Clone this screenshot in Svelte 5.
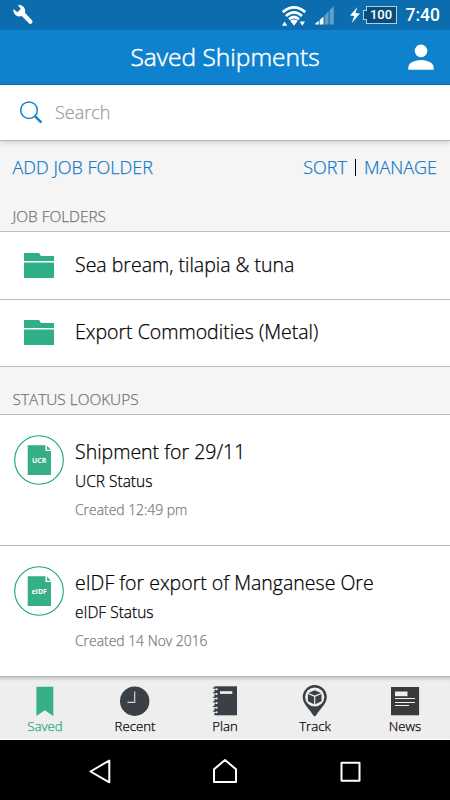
<script lang="ts">
  interface Lookup {
    title: string;
    status: string;
    created: string;
    code: string;
  }

  const folders: string[] = ['Sea bream, tilapia & tuna', 'Export Commodities (Metal)'];

  const lookups: Lookup[] = [
    { title: 'Shipment for 29/11', status: 'UCR Status', created: 'Created 12:49 pm', code: 'UCR' },
    {
      title: 'eIDF for export of Manganese Ore',
      status: 'eIDF Status',
      created: 'Created 14 Nov 2016',
      code: 'eIDF'
    }
  ];

  const tabs: string[] = ['Saved', 'Recent', 'Plan', 'Track', 'News'];
  let active = $state('Saved');
</script>

<div class="screen">
  <div class="status-bar">
    <svg class="wrench" width="20" height="21" viewBox="0 0 20 21">
      <path d="M5 .9 A6.2 6.2 0 0 1 11.9 8.8 L19 16.3 Q20.2 18 18.8 19.2 Q17.5 20.6 15.9 19.3 L8.7 12.1 A6.2 6.2 0 0 1 .5 5 L4.3 8.2 L7.7 5Z" />
    </svg>
    <div class="indicators">
      <svg class="wifi" width="24" height="21" viewBox="0 0 24 21">
        <g fill="none" stroke="#fff" stroke-width="2.7">
          <path d="M.8 6.1 Q12 -3.3 23.2 6.1" />
          <path d="M4 9.9 Q12 2.7 20 9.9" />
          <path d="M7 13.3 Q12 8.7 17 13.3" />
        </g>
        <path d="M8.2 14.8 Q12 12 15.8 14.8 L12 19.7Z M0 19.8 L2.6 15.5 L5.2 19.8Z M17.6 15.5 H23 L20.3 19.8Z" />
      </svg>
      <svg class="signal" width="19" height="19" viewBox="0 0 19 19">
        <path d="M0 18.5 V17.8 L3.8 14.7 V18.5Z M4.7 18.5 V14 L8.5 10.5 V18.5Z" />
        <path class="faint" d="M9.7 18.5 V9.2 L13.5 5.3 V18.5Z M14.6 18.5 V4.3 L18.8 0 V18.5Z" />
      </svg>
      <svg class="bolt" width="10" height="16" viewBox="0 0 10 16">
        <path d="M7.4 0 L0 8.5 L4.2 9 L1.8 16 L10 6.5 L5.5 6Z" />
      </svg>
      <div class="battery">100</div>
      <span class="clock">7:40</span>
    </div>
  </div>

  <header>
    <h1>Saved Shipments</h1>
    <svg class="person" width="26" height="26" viewBox="0 0 26 26">
      <circle cx="13" cy="6.9" r="6.3" />
      <path d="M.3 25.7 V23 Q1 18.5 7 16.9 Q13 15.2 19 16.9 Q25 18.5 25.7 23 V25.7Z" />
    </svg>
  </header>

  <div class="search">
    <svg width="23" height="23" viewBox="0 0 23 23">
      <circle cx="9" cy="9.2" r="8.3" fill="none" stroke="#1683cf" stroke-width="1.5" />
      <path d="M15 15.2 L21.4 21.6" fill="none" stroke="#1683cf" stroke-width="2.5" />
    </svg>
    <span>Search</span>
  </div>

  <div class="actions">
    <span class="link">ADD JOB FOLDER</span>
    <div class="right">
      <span class="link">SORT</span>
      <i class="divider"></i>
      <span class="link">MANAGE</span>
    </div>
  </div>

  <h2 class="jobs">JOB FOLDERS</h2>
  {#each folders as folder}
    <div class="folder">
      <svg width="30" height="25" viewBox="0 0 30 25">
        <path d="M0 0 H15 L17 3 H30 V8.1 H0Z M0 9.5 H30 V25 H0Z" />
      </svg>
      <span>{folder}</span>
    </div>
  {/each}

  <h2 class="statuses">STATUS LOOKUPS</h2>
  {#each lookups as item}
    <div class="lookup">
      <svg class="doc" width="50" height="50" viewBox="0 0 50 50">
        <circle cx="25" cy="25" r="24.3" fill="#fff" stroke="#16a574" stroke-width="1.1" />
        <path d="M13.7 10.3 H31.5 V16 H37 V40 H13.7Z M33 10.8 L37 14.8 H33Z" />
        <text x="25.2" y="28" text-anchor="middle">{item.code}</text>
      </svg>
      <div class="text">
        <span class="title">{item.title}</span>
        <span class="status">{item.status}</span>
        <span class="created">{item.created}</span>
      </div>
    </div>
  {/each}

  <nav class="tabs">
    {#each tabs as tab}
      <button class="tab" class:active={active === tab} onclick={() => (active = tab)}>
        <svg width="34" height="34" viewBox="0 0 34 34">
          {#if tab === 'Saved'}
            <path d="M8.4 2.8 H25.3 V32 L16.8 26.3 L8.4 32Z" fill="#36ae87" />
          {:else if tab === 'Recent'}
            <circle cx="16.7" cy="17.2" r="14.7" />
            <path d="M16.7 7.5 V18.3 H9.5" fill="none" stroke="#d4d6d7" stroke-width="1.2" />
          {:else if tab === 'Plan'}
            <path d="M6.4 2.3 H29 V31.3 H6.4Z" />
            <path d="M12 7.2 H24.3 V9.9 H12Z" fill="#eee" />
            {#each [5.2, 9.9, 14.5, 19.1, 23.7, 28.3] as y}
              <path d="M5 {y} H8.6" stroke="#eee" stroke-width="1" />
              <circle cx="8.6" cy={y} r="1" fill="#eee" />
              <path d="M4.8 {y - 1.2} H8" stroke="#3a4045" stroke-width="1" />
            {/each}
          {:else if tab === 'Track'}
            <path d="M16.7 1 A12.2 12.2 0 0 1 28.8 13.2 C28.8 20 21 26 18.3 31 Q16.7 33.5 15 31 C12.4 26 4.7 20 4.7 13.2 A12.2 12.2 0 0 1 16.7 1Z" />
            <circle cx="16.7" cy="13" r="9.6" fill="#eee" />
            <path d="M16.7 6.3 L23 8.9 L16.7 11.6 L10.4 8.9Z M9.9 10 L16.1 12.7 V20.2 L9.9 17.3Z M23.5 10 V17.3 L17.3 20.2 V12.7Z" />
          {:else}
            <path d="M3 3 H31.1 V31.3 H3Z" fill="#3a3a39" />
            <path d="M7 7.5 H19.5 V12.2 H7Z" fill="#eee" />
            <path d="M7 14.5 H27 M7 18.5 H27 M7 21.5 H21" stroke="#eee" stroke-width="1.2" />
          {/if}
        </svg>
        <span>{tab}</span>
      </button>
    {/each}
  </nav>

  <div class="system-nav">
    <svg width="24" height="26" viewBox="0 0 24 26">
      <path d="M2.5 13.5 L21.3 2.5 V24.3Z" />
    </svg>
    <svg width="26" height="26" viewBox="0 0 26 26">
      <path d="M2 24 V11.3 L13 2 L24 11.3 V24Z" />
    </svg>
    <svg width="22" height="22" viewBox="0 0 22 22">
      <path d="M2.5 2.7 H20.5 V20.8 H2.5Z" />
    </svg>
  </div>
</div>

<style>
  :global(body) {
    background: #f5f5f5;
  }
  .screen {
    width: 450px;
    height: 800px;
    display: flex;
    flex-direction: column;
    overflow: hidden;
    background: #f5f5f5;
    color: #000;
    font-family: 'Open Sans', 'Noto Sans', sans-serif;
    font-weight: 300;
    -webkit-text-stroke: 0.25px;
  }
  .screen > * {
    box-sizing: border-box;
    flex-shrink: 0;
  }
  svg {
    display: block;
    flex-shrink: 0;
  }

  .status-bar {
    height: 30px;
    padding: 0 10px 0 13px;
    display: flex;
    justify-content: space-between;
    background: #0b6cae;
    fill: #fff;
    -webkit-text-stroke: 0;
  }
  .wrench {
    margin-top: 4px;
  }
  .indicators {
    display: flex;
    align-items: flex-start;
    color: #fff;
  }
  .wifi {
    margin: 6px 9px 0 0;
  }
  .signal {
    margin: 6px 16px 0 0;
  }
  .faint {
    opacity: 0.35;
  }
  .bolt {
    margin: 7px 6px 0 0;
  }
  .battery {
    position: relative;
    box-sizing: border-box;
    width: 31px;
    height: 18px;
    margin: 6px 9px 0 0;
    border: 1px solid #b5cedf;
    background: #084d7c;
    text-align: center;
    font: 500 13px/16px Roboto, sans-serif;
  }
  .battery::before {
    content: '';
    position: absolute;
    left: -4px;
    top: 3px;
    width: 3px;
    height: 8px;
    border: 1px solid #b5cedf;
    border-right: 0;
    background: #084d7c;
  }
  .clock {
    font: 500 17.5px/31px Roboto, sans-serif;
  }

  header {
    height: 55px;
    display: grid;
    grid-template-columns: 1fr auto 1fr;
    align-items: center;
    padding: 0 16px;
    background: #0e82ce;
    border-bottom: 1px solid #0871b9;
    fill: #fff;
  }
  h1 {
    grid-column: 2;
    margin: 0;
    color: #fff;
    font-size: 24.5px;
    font-weight: 300;
    -webkit-text-stroke: 0.5px;
    line-height: 54px;
  }
  .person {
    justify-self: end;
  }

  .search {
    height: 56px;
    display: flex;
    align-items: center;
    gap: 12px;
    padding: 0 20px;
    background: #fff;
    border-bottom: 1px solid #b3b3b3;
    box-shadow: 0 2px 5px rgba(0, 0, 0, 0.14);
    color: #9c9c9c;
    font-size: 18px;
  }
  .search span {
    margin-top: -2px;
  }

  .actions {
    height: 54px;
    display: flex;
    justify-content: space-between;
    align-items: center;
    padding: 0 13px 2px 12.5px;
    font-size: 18px;
  }
  .right {
    display: flex;
    align-items: center;
  }
  .link {
    color: #1479c8;
  }
  .divider {
    width: 1px;
    height: 17px;
    margin: 0 8px;
    background: #000;
  }

  h2 {
    margin: 0;
    padding-left: 12.5px;
    border-bottom: 1px solid #bdbdbd;
    color: #747474;
    font-size: 15.4px;
    font-weight: 300;
  }
  .jobs {
    height: 37px;
    line-height: 44px;
  }
  .statuses {
    height: 48px;
    line-height: 66px;
  }

  .folder {
    height: 67.5px;
    display: flex;
    align-items: center;
    gap: 21px;
    padding-left: 24px;
    background: #fff;
    border-bottom: 1px solid #bdbdbd;
    font-size: 19.5px;
  }
  .folder span {
    margin-top: -2px;
  }
  .folder svg {
    fill: #2fae88;
  }

  .lookup {
    height: 131px;
    display: flex;
    gap: 11px;
    padding: 20px 0 0 14px;
    background: #fff;
    border-bottom: 1px solid #b5b5b5;
  }
  .doc {
    margin-left: -0.5px;
    margin-right: 0.5px;
    fill: #36ae87;
  }
  .doc text {
    fill: #fff;
    font-size: 7px;
    font-weight: 700;
    -webkit-text-stroke: 0;
  }
  .text {
    display: flex;
    flex-direction: column;
  }
  .title {
    font-size: 19.5px;
    line-height: 34px;
  }
  .status {
    font-size: 15.5px;
    line-height: 24px;
  }
  .created {
    color: #7c7c7c;
    font-size: 13.9px;
    line-height: 34px;
  }

  .tabs {
    height: 63px;
    display: grid;
    grid-template-columns: repeat(5, 1fr);
    background: #eee;
    border-bottom: 1px solid #fff;
    box-shadow: inset 0 4px 3px -2px rgba(0, 0, 0, 0.16);
  }
  .tab {
    display: flex;
    flex-direction: column;
    align-items: center;
    padding: 7px 0 0;
    border: 0;
    background: none;
    color: #000;
    fill: #3a4045;
    font: 300 13.2px/17px 'Open Sans', sans-serif;
    -webkit-text-stroke: 0.25px;
  }
  .active {
    color: #28a87d;
  }

  .system-nav {
    height: 60px;
    display: grid;
    grid-template-columns: repeat(3, 125px);
    justify-content: center;
    align-items: center;
    justify-items: center;
    padding-top: 2px;
    background: #000;
    fill: none;
    stroke: #fff;
    stroke-width: 2;
    stroke-linejoin: round;
  }
</style>
